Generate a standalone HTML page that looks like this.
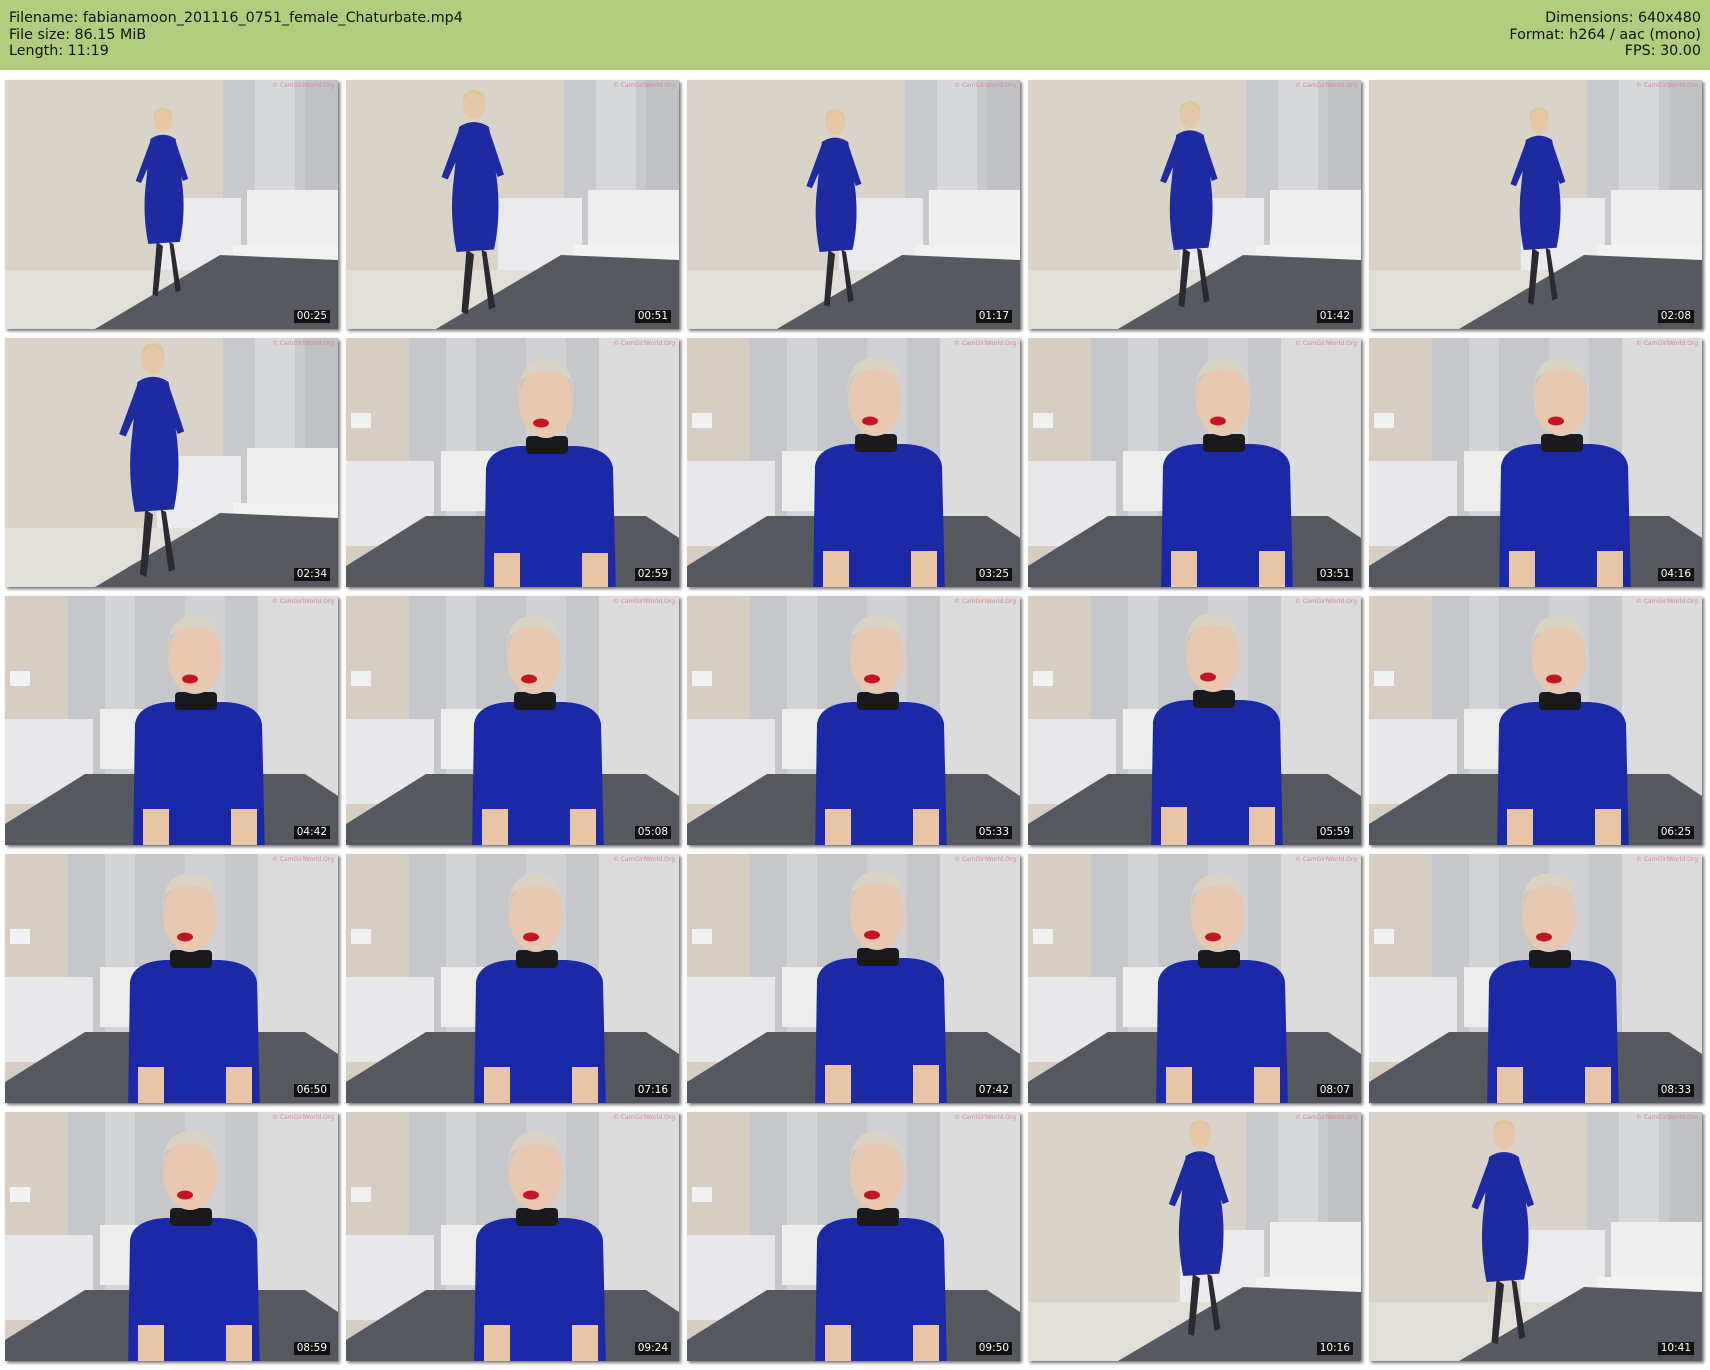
<!DOCTYPE html>
<html><head><meta charset="utf-8">
<style>
html,body{margin:0;padding:0;background:#fff;}
body{width:1710px;height:1370px;position:relative;overflow:hidden;font-family:"DejaVu Sans","Liberation Sans",sans-serif;}
.hdr{position:absolute;left:0;top:0;width:1710px;height:70px;background:#b2cd7e;color:#111;font-size:14.3px;line-height:16.6px;}
.hl{position:absolute;left:9px;top:10px;}
.hr{position:absolute;right:9px;top:10px;text-align:right;}
.t{position:absolute;width:333px;height:249px;box-shadow:2px 2px 3px rgba(0,0,0,0.55);overflow:hidden;background:#d6cec5;}
.t svg{position:absolute;left:0;top:0;width:333px;height:249px;}
.ts{position:absolute;right:8px;bottom:6px;background:#111;color:#fff;font-size:10.5px;line-height:13px;padding:0 3px;}
.wm{position:absolute;right:4px;top:2px;font-size:6px;color:#d88;}
</style></head><body>
<svg width="0" height="0" style="position:absolute">
<defs>
<g id="fig">
  <path d="M-6 118 L-10 168 L-5 170 L0 122 Z M6 118 L12 166 L17 164 L10 120 Z" fill="#2a2a30"/>
  <path d="M-12 20 Q0 12 12 20 L18 60 Q22 90 16 118 L-14 120 Q-20 90 -16 60 Z" fill="#1d2aa0"/>
  <path d="M-12 22 L-26 60 L-21 62 L-9 35 Z M12 22 L24 58 L19 60 L9 35Z" fill="#1d2aa0"/>
  <ellipse cx="0" cy="2" rx="9" ry="12" fill="#e6c8a8"/>
  <path d="M-9 0 Q0 -15 9 0 L8 -6 Q0 -13 -8 -6Z" fill="#d8c89a"/>
</g>
<g id="full">
  <rect x="0" y="0" width="333" height="249" fill="#dad3c9"/>
  <rect x="218" y="0" width="115" height="190" fill="#c9cacd"/>
  <rect x="250" y="0" width="40" height="190" fill="#d8d9dc"/>
  <rect x="300" y="0" width="33" height="190" fill="#bfc1c5"/>
  <rect x="0" y="190" width="333" height="59" fill="#e2ded8"/>
  <rect x="152" y="118" width="84" height="72" fill="#ebebed"/>
  <rect x="242" y="110" width="91" height="62" fill="#efefef"/>
  <rect x="228" y="165" width="105" height="20" fill="#f2f2f2"/>
  <polygon points="90,249 215,175 333,180 333,249" fill="#56595f"/>
</g>
<g id="close">
  <rect x="0" y="0" width="333" height="249" fill="#d6cdc3"/>
  <rect x="63" y="0" width="190" height="180" fill="#c6c7cb"/>
  <rect x="100" y="0" width="30" height="180" fill="#d3d4d7"/>
  <rect x="180" y="0" width="40" height="180" fill="#d0d1d4"/>
  <rect x="253" y="0" width="80" height="249" fill="#dcdcdd"/>
  <rect x="0" y="123" width="88" height="85" fill="#e8e8ea"/>
  <rect x="95" y="113" width="90" height="60" fill="#ededee"/>
  <rect x="5" y="75" width="20" height="15" fill="#f1f1f2"/>
  <polygon points="0,228 80,178 300,178 333,200 333,249 0,249" fill="#55585f"/>
</g>
<g id="bust">
  <path d="M-62 249 L-60 120 Q-57 100 -25 98 L30 98 Q64 100 67 120 L70 249 Z" fill="#1b29a6"/>
  <rect x="-52" y="205" width="26" height="44" fill="#e7c5a6"/>
  <rect x="36" y="205" width="26" height="44" fill="#e7c5a6"/>
  <rect x="-20" y="88" width="42" height="18" rx="4" fill="#1a1a1c"/>
  <ellipse cx="0" cy="54" rx="27" ry="36" fill="#e8c8b0"/>
  <path d="M-28 50 Q-27 10 0 12 Q27 10 28 50 L25 32 Q0 14 -25 32 Z" fill="#d9d3c6"/>
  <ellipse cx="-5" cy="75" rx="8" ry="4.5" fill="#c41620"/>
</g>
</defs></svg>

<div class="hdr">
<div class="hl">Filename: fabianamoon_201116_0751_female_Chaturbate.mp4<br>File size: 86.15 MiB<br>Length: 11:19</div>
<div class="hr">Dimensions: 640x480<br>Format: h264 / aac (mono)<br>FPS: 30.00</div>
</div>

<div class="t" style="left:5px;top:80px"><svg viewBox="0 0 333 249"><use href="#full"/><g transform="translate(158,38) scale(1.05)"><use href="#fig"/></g></svg><span class="wm">© CamGirlWorld.Org</span><span class="ts">00:25</span></div>
<div class="t" style="left:346px;top:80px"><svg viewBox="0 0 333 249"><use href="#full"/><g transform="translate(128,22) scale(1.25)"><use href="#fig"/></g></svg><span class="wm">© CamGirlWorld.Org</span><span class="ts">00:51</span></div>
<div class="t" style="left:687px;top:80px"><svg viewBox="0 0 333 249"><use href="#full"/><g transform="translate(148,40) scale(1.1)"><use href="#fig"/></g></svg><span class="wm">© CamGirlWorld.Org</span><span class="ts">01:17</span></div>
<div class="t" style="left:1028px;top:80px"><svg viewBox="0 0 333 249"><use href="#full"/><g transform="translate(162,32) scale(1.15)"><use href="#fig"/></g></svg><span class="wm">© CamGirlWorld.Org</span><span class="ts">01:42</span></div>
<div class="t" style="left:1369px;top:80px"><svg viewBox="0 0 333 249"><use href="#full"/><g transform="translate(170,38) scale(1.1)"><use href="#fig"/></g></svg><span class="wm">© CamGirlWorld.Org</span><span class="ts">02:08</span></div>

<div class="t" style="left:5px;top:338px"><svg viewBox="0 0 333 249"><use href="#full"/><g transform="translate(148,18) scale(1.3)"><use href="#fig"/></g></svg><span class="wm">© CamGirlWorld.Org</span><span class="ts">02:34</span></div>
<div class="t" style="left:346px;top:338px"><svg viewBox="0 0 333 249"><use href="#close"/><g transform="translate(200,10)"><use href="#bust"/></g></svg><span class="wm">© CamGirlWorld.Org</span><span class="ts">02:59</span></div>
<div class="t" style="left:687px;top:338px"><svg viewBox="0 0 333 249"><use href="#close"/><g transform="translate(188,8)"><use href="#bust"/></g></svg><span class="wm">© CamGirlWorld.Org</span><span class="ts">03:25</span></div>
<div class="t" style="left:1028px;top:338px"><svg viewBox="0 0 333 249"><use href="#close"/><g transform="translate(195,8)"><use href="#bust"/></g></svg><span class="wm">© CamGirlWorld.Org</span><span class="ts">03:51</span></div>
<div class="t" style="left:1369px;top:338px"><svg viewBox="0 0 333 249"><use href="#close"/><g transform="translate(192,8)"><use href="#bust"/></g></svg><span class="wm">© CamGirlWorld.Org</span><span class="ts">04:16</span></div>

<div class="t" style="left:5px;top:596px"><svg viewBox="0 0 333 249"><use href="#close"/><g transform="translate(190,8)"><use href="#bust"/></g></svg><span class="wm">© CamGirlWorld.Org</span><span class="ts">04:42</span></div>
<div class="t" style="left:346px;top:596px"><svg viewBox="0 0 333 249"><use href="#close"/><g transform="translate(188,8)"><use href="#bust"/></g></svg><span class="wm">© CamGirlWorld.Org</span><span class="ts">05:08</span></div>
<div class="t" style="left:687px;top:596px"><svg viewBox="0 0 333 249"><use href="#close"/><g transform="translate(190,8)"><use href="#bust"/></g></svg><span class="wm">© CamGirlWorld.Org</span><span class="ts">05:33</span></div>
<div class="t" style="left:1028px;top:596px"><svg viewBox="0 0 333 249"><use href="#close"/><g transform="translate(185,6)"><use href="#bust"/></g></svg><span class="wm">© CamGirlWorld.Org</span><span class="ts">05:59</span></div>
<div class="t" style="left:1369px;top:596px"><svg viewBox="0 0 333 249"><use href="#close"/><g transform="translate(190,8)"><use href="#bust"/></g></svg><span class="wm">© CamGirlWorld.Org</span><span class="ts">06:25</span></div>

<div class="t" style="left:5px;top:854px"><svg viewBox="0 0 333 249"><use href="#close"/><g transform="translate(185,8)"><use href="#bust"/></g></svg><span class="wm">© CamGirlWorld.Org</span><span class="ts">06:50</span></div>
<div class="t" style="left:346px;top:854px"><svg viewBox="0 0 333 249"><use href="#close"/><g transform="translate(190,8)"><use href="#bust"/></g></svg><span class="wm">© CamGirlWorld.Org</span><span class="ts">07:16</span></div>
<div class="t" style="left:687px;top:854px"><svg viewBox="0 0 333 249"><use href="#close"/><g transform="translate(190,6)"><use href="#bust"/></g></svg><span class="wm">© CamGirlWorld.Org</span><span class="ts">07:42</span></div>
<div class="t" style="left:1028px;top:854px"><svg viewBox="0 0 333 249"><use href="#close"/><g transform="translate(190,8)"><use href="#bust"/></g></svg><span class="wm">© CamGirlWorld.Org</span><span class="ts">08:07</span></div>
<div class="t" style="left:1369px;top:854px"><svg viewBox="0 0 333 249"><use href="#close"/><g transform="translate(180,8)"><use href="#bust"/></g></svg><span class="wm">© CamGirlWorld.Org</span><span class="ts">08:33</span></div>

<div class="t" style="left:5px;top:1112px"><svg viewBox="0 0 333 249"><use href="#close"/><g transform="translate(185,8)"><use href="#bust"/></g></svg><span class="wm">© CamGirlWorld.Org</span><span class="ts">08:59</span></div>
<div class="t" style="left:346px;top:1112px"><svg viewBox="0 0 333 249"><use href="#close"/><g transform="translate(190,8)"><use href="#bust"/></g></svg><span class="wm">© CamGirlWorld.Org</span><span class="ts">09:24</span></div>
<div class="t" style="left:687px;top:1112px"><svg viewBox="0 0 333 249"><use href="#close"/><g transform="translate(190,8)"><use href="#bust"/></g></svg><span class="wm">© CamGirlWorld.Org</span><span class="ts">09:50</span></div>
<div class="t" style="left:1028px;top:1112px"><svg viewBox="0 0 333 249"><use href="#full"/><g transform="translate(172,20) scale(1.2)"><use href="#fig"/></g></svg><span class="wm">© CamGirlWorld.Org</span><span class="ts">10:16</span></div>
<div class="t" style="left:1369px;top:1112px"><svg viewBox="0 0 333 249"><use href="#full"/><g transform="translate(135,20) scale(1.25)"><use href="#fig"/></g></svg><span class="wm">© CamGirlWorld.Org</span><span class="ts">10:41</span></div>
</body></html>
